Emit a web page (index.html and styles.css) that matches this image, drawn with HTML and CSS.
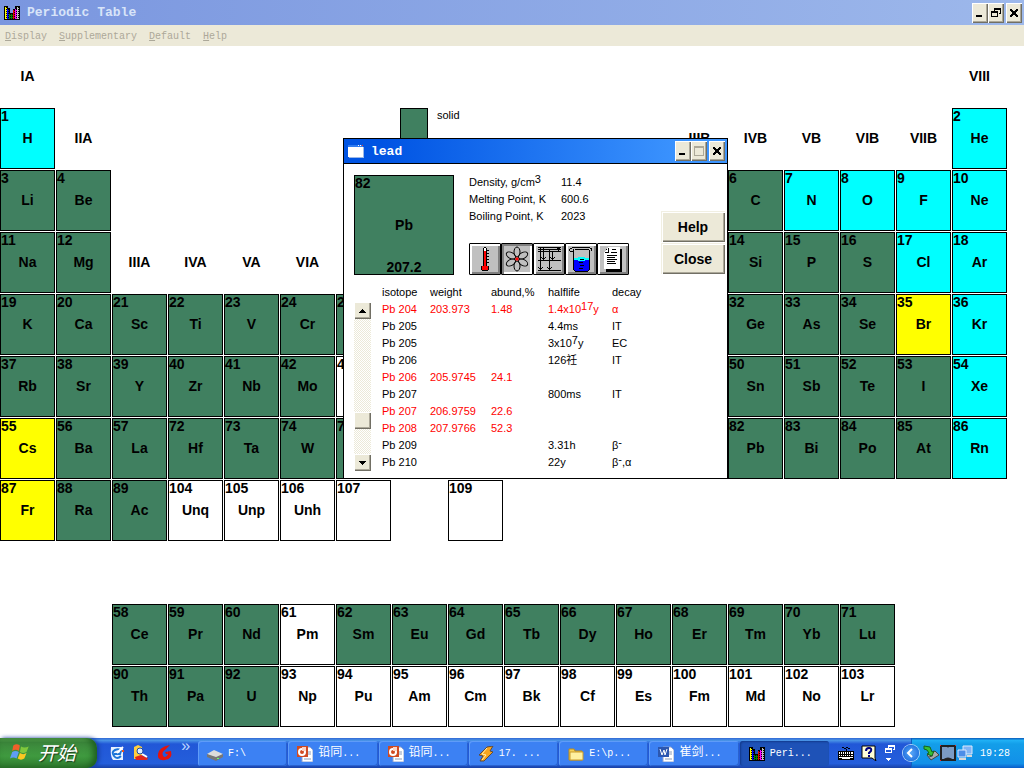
FILE: index.html
```
<!DOCTYPE html>
<html lang="en">
<head>
    <meta charset="UTF-8">
    <meta name="viewport" content="width=device-width, initial-scale=1.0">
    <title>Periodic Table</title>
    <link rel="stylesheet" href="styles.css">
</head>
<body>
    <!-- shared icons -->
    <svg class="defs" width="0" height="0" aria-hidden="true">
        <symbol id="app" viewBox="0 0 16 14" shape-rendering="crispEdges">
            <path d="M0 0h4v2h2v5h3V3h2V0h5v14H0z" fill="#000"/>
            <path d="M1 1h2v12H1z" fill="#ff0"/>
            <path d="M3 3h2v10H3z" fill="#00f"/>
            <path d="M5 8h4v5H5z" fill="#008000"/>
            <path d="M9 4h2v9H9z" fill="#e00000"/>
            <path d="M11 3h2v10h-2z" fill="#f0f"/>
            <path d="M13 1h2v12h-2z" fill="#c0c0c0"/>
            <path d="M2.500 1v12M4.500 3v10M6.500 8v5M8.500 8v5M10.500 4v9M12.500 3v10M14.500 1v12" stroke="#000" stroke-dasharray="1 1" fill="none"/>
        </symbol>
        <symbol id="min" viewBox="0 0 12 12" shape-rendering="crispEdges">
            <path d="M2 8h6v2H2z"/>
        </symbol>
        <symbol id="restore" viewBox="0 0 12 12" shape-rendering="crispEdges">
            <path d="M4 1h7v6H9V6h1V3H5v1H4zM1 4h7v6H1zM2 6v3h5V6z" fill-rule="evenodd"/>
        </symbol>
        <symbol id="max" viewBox="0 0 12 12" shape-rendering="crispEdges">
            <path d="M1 1h10v10H1zM2 3v7h8V3z" fill-rule="evenodd"/>
        </symbol>
        <symbol id="close" viewBox="0 0 12 12" shape-rendering="crispEdges">
            <path d="M2 2h2v1h1v1h2V3h1V2h2v2H9v1H8v2h1v1h1v2H8V9H7V8H5v1H4v1H2V8h1V7h1V5H3V4H2z"/>
        </symbol>
        <symbol id="ppt" viewBox="0 0 16 16">
            <path d="M5 1h8l3 3v12H5z" fill="#fff" stroke="#8ba0cf"/>
            <path d="M11 6h3M11 8h3M7 13h7" stroke="#8a9ab8"/>
            <path d="M0 0h11v11H0z" fill="#d04a22"/>
            <circle cx="5" cy="6" r="3" fill="none" stroke="#fff" stroke-width="2"/>
            <path d="M5 5V1h4v4z" fill="#fbd3c4"/>
        </symbol>
    </svg>

    <header class="titlebar">
        <svg class="app-icon"><use href="#app"/></svg>
        <h1>Periodic Table</h1>
        <button class="win-btn" aria-label="Minimize"><svg><use href="#min"/></svg></button>
        <button class="win-btn" aria-label="Restore"><svg><use href="#restore"/></svg></button>
        <button class="win-btn last" aria-label="Close"><svg><use href="#close"/></svg></button>
    </header>
    <nav class="menubar">
        <a href="#"><u>D</u>isplay</a>
        <a href="#"><u>S</u>upplementary</a>
        <a href="#"><u>D</u>efault</a>
        <a href="#"><u>H</u>elp</a>
    </nav>

    <main class="table">
        <div class="group c1">IA</div>
        <div class="group c18">VIII</div>

        <div class="el gas c1"><i>1</i><b>H</b></div>
        <div class="group">IIA</div>
        <div class="legend"><span class="swatch"></span>solid</div>
        <div class="group c13">IIIB</div>
        <div class="group">IVB</div>
        <div class="group">VB</div>
        <div class="group">VIB</div>
        <div class="group">VIIB</div>
        <div class="el gas"><i>2</i><b>He</b></div>

        <div class="el c1"><i>3</i><b>Li</b></div>
        <div class="el"><i>4</i><b>Be</b></div>
        <div class="el c14"><i>6</i><b>C</b></div>
        <div class="el gas"><i>7</i><b>N</b></div>
        <div class="el gas"><i>8</i><b>O</b></div>
        <div class="el gas"><i>9</i><b>F</b></div>
        <div class="el gas"><i>10</i><b>Ne</b></div>

        <div class="el c1"><i>11</i><b>Na</b></div>
        <div class="el"><i>12</i><b>Mg</b></div>
        <div class="group">IIIA</div>
        <div class="group">IVA</div>
        <div class="group">VA</div>
        <div class="group">VIA</div>
        <div class="el c14"><i>14</i><b>Si</b></div>
        <div class="el"><i>15</i><b>P</b></div>
        <div class="el"><i>16</i><b>S</b></div>
        <div class="el gas"><i>17</i><b>Cl</b></div>
        <div class="el gas"><i>18</i><b>Ar</b></div>

        <div class="el c1"><i>19</i><b>K</b></div>
        <div class="el"><i>20</i><b>Ca</b></div>
        <div class="el"><i>21</i><b>Sc</b></div>
        <div class="el"><i>22</i><b>Ti</b></div>
        <div class="el"><i>23</i><b>V</b></div>
        <div class="el"><i>24</i><b>Cr</b></div>
        <div class="el"><i>25</i></div>
        <div class="el c14"><i>32</i><b>Ge</b></div>
        <div class="el"><i>33</i><b>As</b></div>
        <div class="el"><i>34</i><b>Se</b></div>
        <div class="el liquid"><i>35</i><b>Br</b></div>
        <div class="el gas"><i>36</i><b>Kr</b></div>

        <div class="el c1"><i>37</i><b>Rb</b></div>
        <div class="el"><i>38</i><b>Sr</b></div>
        <div class="el"><i>39</i><b>Y</b></div>
        <div class="el"><i>40</i><b>Zr</b></div>
        <div class="el"><i>41</i><b>Nb</b></div>
        <div class="el"><i>42</i><b>Mo</b></div>
        <div class="el synthetic"><i>43</i></div>
        <div class="el c14"><i>50</i><b>Sn</b></div>
        <div class="el"><i>51</i><b>Sb</b></div>
        <div class="el"><i>52</i><b>Te</b></div>
        <div class="el"><i>53</i><b>I</b></div>
        <div class="el gas"><i>54</i><b>Xe</b></div>

        <div class="el liquid c1"><i>55</i><b>Cs</b></div>
        <div class="el"><i>56</i><b>Ba</b></div>
        <div class="el"><i>57</i><b>La</b></div>
        <div class="el"><i>72</i><b>Hf</b></div>
        <div class="el"><i>73</i><b>Ta</b></div>
        <div class="el"><i>74</i><b>W</b></div>
        <div class="el"><i>75</i></div>
        <div class="el c14"><i>82</i><b>Pb</b></div>
        <div class="el"><i>83</i><b>Bi</b></div>
        <div class="el"><i>84</i><b>Po</b></div>
        <div class="el"><i>85</i><b>At</b></div>
        <div class="el gas"><i>86</i><b>Rn</b></div>

        <div class="el liquid c1"><i>87</i><b>Fr</b></div>
        <div class="el"><i>88</i><b>Ra</b></div>
        <div class="el"><i>89</i><b>Ac</b></div>
        <div class="el synthetic"><i>104</i><b>Unq</b></div>
        <div class="el synthetic"><i>105</i><b>Unp</b></div>
        <div class="el synthetic"><i>106</i><b>Unh</b></div>
        <div class="el synthetic"><i>107</i></div>
        <div class="el synthetic c9"><i>109</i></div>

        <div class="spacer"></div>

        <div class="el c3"><i>58</i><b>Ce</b></div>
        <div class="el"><i>59</i><b>Pr</b></div>
        <div class="el"><i>60</i><b>Nd</b></div>
        <div class="el synthetic"><i>61</i><b>Pm</b></div>
        <div class="el"><i>62</i><b>Sm</b></div>
        <div class="el"><i>63</i><b>Eu</b></div>
        <div class="el"><i>64</i><b>Gd</b></div>
        <div class="el"><i>65</i><b>Tb</b></div>
        <div class="el"><i>66</i><b>Dy</b></div>
        <div class="el"><i>67</i><b>Ho</b></div>
        <div class="el"><i>68</i><b>Er</b></div>
        <div class="el"><i>69</i><b>Tm</b></div>
        <div class="el"><i>70</i><b>Yb</b></div>
        <div class="el"><i>71</i><b>Lu</b></div>

        <div class="el c3"><i>90</i><b>Th</b></div>
        <div class="el"><i>91</i><b>Pa</b></div>
        <div class="el"><i>92</i><b>U</b></div>
        <div class="el synthetic"><i>93</i><b>Np</b></div>
        <div class="el synthetic"><i>94</i><b>Pu</b></div>
        <div class="el synthetic"><i>95</i><b>Am</b></div>
        <div class="el synthetic"><i>96</i><b>Cm</b></div>
        <div class="el synthetic"><i>97</i><b>Bk</b></div>
        <div class="el synthetic"><i>98</i><b>Cf</b></div>
        <div class="el synthetic"><i>99</i><b>Es</b></div>
        <div class="el synthetic"><i>100</i><b>Fm</b></div>
        <div class="el synthetic"><i>101</i><b>Md</b></div>
        <div class="el synthetic"><i>102</i><b>No</b></div>
        <div class="el synthetic"><i>103</i><b>Lr</b></div>
    </main>

    <section class="dialog" role="dialog" aria-labelledby="dialogTitle">
        <div class="titlebar active">
            <svg class="app-icon" viewBox="0 0 16 14" shape-rendering="crispEdges">
                <path d="M0 1h15v12H0z" fill="#fff"/>
                <path d="M0 1h15v2H0z" fill="#2f7bf0"/>
                <path d="M10 1h1v1h-1zM12 1h1v1h-1z" fill="#fff"/>
                <path d="M14 1h1v1h-1z" fill="#f03c1e"/>
                <path d="M15 3v10H1" stroke="#9cb8e8" fill="none"/>
            </svg>
            <h2 id="dialogTitle">lead</h2>
            <button class="win-btn" aria-label="Minimize"><svg><use href="#min"/></svg></button>
            <button class="win-btn off" aria-label="Maximize" disabled><svg><use href="#max"/></svg></button>
            <button class="win-btn last" aria-label="Close"><svg><use href="#close"/></svg></button>
        </div>

        <div class="summary">
            <div class="el big"><i>82</i><b>Pb</b><em>207.2</em></div>
            <div class="facts">
                <dl>
                    <dt>Density, g/cm<sup>3</sup></dt><dd>11.4</dd>
                    <dt>Melting Point, K</dt><dd>600.6</dd>
                    <dt>Boiling Point, K</dt><dd>2023</dd>
                </dl>
                <div class="tools">
                    <button aria-label="Thermal data">
                        <svg viewBox="0 0 28 28" shape-rendering="crispEdges">
                            <path d="M12 3h1V2h2v1h1v19h-4z" fill="#000"/>
                            <path d="M13 3h2v3h-2z" fill="#fff"/>
                            <path d="M13 6h2v16h-2z" fill="red"/>
                            <path d="M10 21h8v4h-1v1h-6v-1h-1z" fill="#000"/>
                            <path d="M11 21h6v4h-6z" fill="red"/>
                            <path d="M16 5.500h2M16 8.500h2M16 11.500h2M16 14.500h2M16 17.500h2" stroke="#000"/>
                        </svg>
                    </button>
                    <button class="pressed" aria-label="Isotopes" aria-pressed="true">
                        <svg viewBox="0 0 28 28">
                            <g fill="none" stroke="#000">
                                <ellipse cx="14" cy="7" rx="3" ry="5"/>
                                <ellipse cx="14" cy="7" rx="3" ry="5" transform="rotate(60 14 14)"/>
                                <ellipse cx="14" cy="7" rx="3" ry="5" transform="rotate(120 14 14)"/>
                                <ellipse cx="14" cy="7" rx="3" ry="5" transform="rotate(180 14 14)"/>
                                <ellipse cx="14" cy="7" rx="3" ry="5" transform="rotate(240 14 14)"/>
                                <ellipse cx="14" cy="7" rx="3" ry="5" transform="rotate(300 14 14)"/>
                            </g>
                            <path d="M12.500 12.500h3v3h-3z" fill="red"/>
                        </svg>
                    </button>
                    <button aria-label="Energy levels">
                        <svg viewBox="0 0 28 28" shape-rendering="crispEdges">
                            <path d="M3 2.500h23M3 4.500h23M3 6.500h23M3 15.500h23M3 25.500h23M5.500 2v23M8.500 2v13M14.500 4v21M17.500 6v9M23.500 3v4" fill="none" stroke="#000"/>
                            <path d="M3 22h1v1h1v1h1v-1h1v-1h1v1H7v1H6v1H5v-1H4v-1H3zM12 22h1v1h1v1h1v-1h1v-1h1v1h-1v1h-1v1h-1v-1h-1v-1h-1zM6 12h1v1h1v1h1v-1h1v-1h1v1h-1v1H9v1H8v-1H7v-1H6zM15 12h1v1h1v1h1v-1h1v-1h1v1h-1v1h-1v1h-1v-1h-1v-1h-1z"/>
                            <path d="M21 5l2-3 3 3z"/>
                        </svg>
                    </button>
                    <button aria-label="Chemical properties">
                        <svg viewBox="0 0 28 28" shape-rendering="crispEdges">
                            <path d="M7 13h15v13H7z" fill="#00f"/>
                            <path d="M7 13h4v-1h7v1h4v2h-4v1h-7v-1H7z" fill="#0ff"/>
                            <path d="M5 2h18v1H5zM3 3h2v1H3zM23 3h2v3h-1V4h-1zM2 4h1v2H2zM3 6h3v1H3zM8 4h14v1H8zM6 4h1v21H6zM22 5h1v20h-1zM7 25h1v1h13v-1h1v1h-1v1H8v-1H7z"/>
                            <path d="M13 14.500h4M12 17.500h4M13 20.500h4M12 23.500h4" stroke="#000"/>
                        </svg>
                    </button>
                    <button aria-label="Notes">
                        <svg viewBox="0 0 28 28" shape-rendering="crispEdges">
                            <path d="M7 4h16v23H7z"/>
                            <path d="M9 2h12v22H5V7h1V6h1V5h1V3h1z" fill="#fff"/>
                            <path d="M9 3h1v5H6V7h3zM13 4h4v1h-4zM12 7h6v1h-6zM8 10h10v1H8zM8 12h8v1H8zM8 14h10v1H8zM8 16h8v1H8zM8 18h9v1H8z"/>
                        </svg>
                    </button>
                </div>
            </div>
            <div class="actions">
                <button>Help</button>
                <button>Close</button>
            </div>
        </div>

        <div class="isotopes">
            <div class="scrollbar">
                <button aria-label="Scroll up"><svg viewBox="0 0 7 4" shape-rendering="crispEdges"><path d="M3 0h1v1h1v1h1v1h1v1H0V3h1V2h1V1h1z"/></svg></button>
                <span class="thumb"></span>
                <button aria-label="Scroll down"><svg viewBox="0 0 7 4" shape-rendering="crispEdges"><path d="M0 0h7v1H6v1H5v1H4v1H3V3H2V2H1V1H0z"/></svg></button>
            </div>
            <table>
                <thead>
                    <tr><th>isotope</th><th>weight</th><th>abund,%</th><th>halflife</th><th>decay</th></tr>
                </thead>
                <tbody>
                    <tr class="natural"><td>Pb 204</td><td>203.973</td><td>1.48</td><td>1.4x10<sup>17</sup>y</td><td>α</td></tr>
                    <tr><td>Pb 205</td><td></td><td></td><td>4.4ms</td><td>IT</td></tr>
                    <tr><td>Pb 205</td><td></td><td></td><td>3x10<sup>7</sup>y</td><td>EC</td></tr>
                    <tr><td>Pb 206</td><td></td><td></td><td>126祍</td><td>IT</td></tr>
                    <tr class="natural"><td>Pb 206</td><td>205.9745</td><td>24.1</td><td></td><td></td></tr>
                    <tr><td>Pb 207</td><td></td><td></td><td>800ms</td><td>IT</td></tr>
                    <tr class="natural"><td>Pb 207</td><td>206.9759</td><td>22.6</td><td></td><td></td></tr>
                    <tr class="natural"><td>Pb 208</td><td>207.9766</td><td>52.3</td><td></td><td></td></tr>
                    <tr><td>Pb 209</td><td></td><td></td><td>3.31h</td><td>β<sup>-</sup></td></tr>
                    <tr><td>Pb 210</td><td></td><td></td><td>22y</td><td>β<sup>-</sup>,α</td></tr>
                </tbody>
            </table>
        </div>
    </section>

    <footer class="taskbar">
        <button class="start">
            <svg viewBox="0 0 20 18">
                <path d="M3 3q3-2 6 0L8 8Q5 6 2 8z" fill="#f0602a"/>
                <path d="M10 4q3 2 7 0l-2 5q-3 2-6 0z" fill="#7fc83c"/>
                <path d="M2 9q3-2 6 0l-2 6Q3 13 0 15z" fill="#5f9df5"/>
                <path d="M9 10q3 2 6 0l-2 5q-3 2-6 0z" fill="#fbc822"/>
            </svg>
            开始
        </button>
        <div class="quick">
            <a href="#" aria-label="Browser">
                <svg viewBox="0 0 16 16">
                    <path d="M2 2h10l2 2v11H4q-3-3-2-13z" fill="#e8f2ff"/>
                    <path d="M12 11q-4 4-7 0t1-6 6 1l-1 3H5" fill="none" stroke="#1c75d8" stroke-width="2"/>
                    <path d="M8 8l6-6" stroke="#fff" stroke-width="2"/>
                    <path d="M13 5h2v2h-2z" fill="#f0531c"/>
                </svg>
            </a>
            <a href="#" aria-label="Search">
                <svg viewBox="0 0 16 16">
                    <path d="M1 2l4-2 4 2v12H1z" fill="#ffcf3e"/>
                    <path d="M2 12l6-2 7 3-1 2H3z" fill="#e0261c"/>
                    <circle cx="7" cy="6" r="3" fill="#dff0ff" stroke="#204aa0"/>
                    <path d="M9 9l5 3" stroke="#fff" stroke-width="2"/>
                </svg>
            </a>
            <a href="#" aria-label="Player">
                <svg viewBox="0 0 16 16">
                    <path d="M13 0Q2 2 1 9t7 6 6-9l-6 1 1 2h2q-1 3-4 3-4-4 2-8z" fill="#e3140c"/>
                </svg>
            </a>
            <span class="more">»</span>
        </div>
        <div class="tasks">
            <button>
                <svg viewBox="0 0 16 16"><path d="M0 8l7-4 9 4-7 5z" fill="#dcdcdc"/><path d="M0 8l9 3 7-3v3l-7 4-9-4z" fill="#777"/><path d="M10 12h2v1h-2z" fill="#6f6"/></svg>
                <span>F:\</span>
            </button>
            <button><svg><use href="#ppt"/></svg><span><b>铅同</b>...</span></button>
            <button><svg><use href="#ppt"/></svg><span><b>铅同</b>...</span></button>
            <button>
                <svg viewBox="0 0 16 16"><path d="M9 1l6-1-3 5 3 1-9 9H2l3-5-4-1z" fill="#f7a51e" stroke="#5d4a3c"/><path d="M9 2L4 8l4 1-4 5" fill="none" stroke="#fff0b0"/></svg>
                <span>17. ...</span>
            </button>
            <button>
                <svg viewBox="0 0 16 16"><path d="M1 3h5l1 2h7v9H1z" fill="#f4cf56" stroke="#b98a1c"/><path d="M2 6h13v8H2z" fill="#fff0a0" stroke="#c99a2c"/></svg>
                <span>E:\p...</span>
            </button>
            <button>
                <svg viewBox="0 0 16 16"><path d="M5 1h8l3 3v12H5z" fill="#fff" stroke="#8ba0cf"/><path d="M11 6h3M11 8h3M7 13h7" stroke="#8a9ab8"/><path d="M0 1h11v10H0z" fill="#2c57b0"/><path d="M2 3l2 6 2-5 1 5 2-6" fill="none" stroke="#fff"/></svg>
                <span><b>崔剑</b>...</span>
            </button>
            <button class="current"><svg><use href="#app"/></svg><span>Peri...</span></button>
        </div>
        <div class="lang">
            <svg viewBox="0 0 16 16" shape-rendering="crispEdges">
                <path d="M4 2h2v1h2V2h2v1h2v1h-2V3H8v1H6V3H4zM8 4h1v2H8z" fill="#000"/>
                <path d="M0 6h16v9H0z" fill="#000"/>
                <path d="M1 7h14v7H1z" fill="#fff"/>
                <path d="M1 9h14M1 11h14M1 13h3M12 13h3M2.500 7v4M4.500 7v4M6.500 7v4M8.500 7v4M10.500 7v4M12.500 7v4" stroke="#000" fill="none"/>
            </svg>
            <svg viewBox="0 0 16 16">
                <path d="M1 1h13v12l1 3-4-3H1z" fill="#ffffd8" stroke="#000"/>
                <path d="M5 6q0-3 3-3t2 3l-2 2v1M8 10v2" fill="none" stroke="#000080" stroke-width="2"/>
            </svg>
            <svg viewBox="0 0 16 16" shape-rendering="crispEdges">
                <path d="M4 0h7v5H9V4h1V2H5v1H4zM1 3h7v5H1zM2 5v2h5V5z" fill="#fff" fill-rule="evenodd"/>
                <path d="M2 13h5v1H6v1H5v1H4v-1H3v-1H2z" fill="#fff"/>
            </svg>
        </div>
        <div class="tray">
            <button class="expand" aria-label="Show hidden icons"><svg viewBox="0 0 16 16"><path d="M9 4L5 8l4 4" fill="none" stroke="#fff" stroke-width="2"/></svg></button>
            <svg viewBox="0 0 16 16"><path d="M4 10l8-4 4 4-8 5z" fill="#aaa" stroke="#444"/><path d="M6 11l3-1 1 1-3 1z" fill="#333"/><path d="M1 1l6 1 2 5 2-1-2 5-5-2 2-1-2-3-3-1z" fill="#35c135" stroke="#15631a"/></svg>
            <svg viewBox="0 0 16 16"><path d="M1 1h14v14H1z" fill="#7c9cc4" stroke="#222" stroke-width="2"/><path d="M5 1q3 2 6 0M3 15q5-4 10 0" fill="#222" stroke="#222"/><path d="M0 0h1v1H0zM15 0h1v1h-1zM0 15h1v1H0z" fill="#e22"/></svg>
            <svg viewBox="0 0 16 16"><path d="M6 1h9v8H6z" fill="#7fb4f6" stroke="#dbe8fb"/><path d="M1 5h8v7H1z" fill="#4c8de8" stroke="#dbe8fb"/><path d="M2 14h7M10 11h5" stroke="#d8d8d8" stroke-width="2"/></svg>
            <time>19:28</time>
        </div>
    </footer>
</body>
</html>
```
FILE: styles.css
```
* {
    box-sizing: border-box;
}

body {
    margin: 0;
    min-height: 100vh;
    display: flex;
    flex-direction: column;
    position: relative;
    background: #fff;
    color: #000;
    font-family: "Liberation Sans", "Noto Sans CJK SC", sans-serif;
    font-size: 11px;
}

button {
    margin: 0;
    padding: 0;
    border: none;
    font: inherit;
    color: inherit;
}

svg {
    display: block;
    flex: none;
}

.defs {
    position: absolute;
}

/* title bars */
.titlebar {
    display: flex;
    align-items: center;
    height: 25px;
    padding: 0 2px 0 4px;
    background: linear-gradient(to right, #7a96df, #9db8eb);
    color: #d8e4f8;
}

.titlebar.active {
    background: linear-gradient(to right, #0054e3 10%, #3d95ff 90%);
    border-bottom: 1px solid #000;
    color: #fff;
}

.titlebar h1,
.titlebar h2 {
    flex: 1;
    margin: 0 0 0 7px;
    font: bold 13px "Liberation Mono", monospace;
}

.app-icon {
    width: 16px;
    height: 14px;
}

.win-btn {
    display: flex;
    align-items: center;
    justify-content: center;
    width: 16px;
    height: 20px;
    background: #ece9d8;
    box-shadow: inset 1px 1px #fff, inset -1px -1px #716f64, inset -2px -2px #aca899;
}

.win-btn svg {
    width: 12px;
    height: 12px;
}

.win-btn.last {
    margin-left: 2px;
}

.win-btn.off {
    fill: #aca899;
}

.menubar {
    display: flex;
    align-items: center;
    gap: 12px;
    height: 21px;
    padding: 2px 5px 0;
    background: #ece9d8;
    font: 10px "Liberation Mono", monospace;
}

.menubar a {
    color: #aca899;
    text-decoration: none;
}

/* periodic table */
.table {
    flex: 1;
    display: grid;
    grid-template-columns: repeat(18, 1fr);
    grid-auto-rows: 61px;
    gap: 1px;
    margin-right: 17px;
    font-size: 14px;
    font-weight: bold;
}

.group {
    display: flex;
    align-items: center;
    justify-content: center;
    padding-bottom: 2px;
}

.el {
    display: grid;
    padding-bottom: 2px;
    border: 1px solid #000;
    background: #408060;
}

.el i,
.el b,
.el em {
    grid-area: 1 / 1;
    font-style: normal;
    line-height: 14px;
}

.el b {
    place-self: center;
}

.el em {
    place-self: end center;
}

.gas { background: #0ff; }
.liquid { background: #ff0; }
.synthetic { background: #fff; }

.c1 { grid-column: 1; }
.c3 { grid-column: 3; }
.c9 { grid-column: 9; }
.c13 { grid-column: 13; }
.c14 { grid-column: 14; }
.c18 { grid-column: 18; }

.spacer {
    grid-column: 1 / -1;
}

.legend {
    grid-column: 8 / span 3;
    display: flex;
    gap: 9px;
    padding-left: 8px;
    font-size: 11px;
    font-weight: normal;
    line-height: 14px;
}

.swatch {
    width: 28px;
    border: 1px solid #000;
    background: #408060;
}

/* element window */
.dialog {
    position: absolute;
    left: 343px;
    top: 138px;
    width: 385px;
    border: 1px solid #000;
    background: #fff;
}

.summary {
    display: flex;
    padding: 11px 2px 0 10px;
}

.big {
    width: 100px;
    height: 100px;
    padding-bottom: 0;
    font-size: 14px;
    font-weight: bold;
}

.facts {
    flex: 1;
    margin-left: 15px;
}

dl {
    display: grid;
    grid-template-columns: 92px 1fr;
    grid-auto-rows: 17px;
    margin: 0 0 17px;
    line-height: 14px;
}

dt,
dd {
    margin: 0;
    white-space: nowrap;
}

sup {
    font-size: 11px;
    line-height: 0;
    vertical-align: 3px;
}

.tools {
    display: flex;
}

.tools button {
    width: 32px;
    height: 32px;
    padding: 1px;
    border: 1px solid #000;
    border-radius: 1px;
    background: #c0c0c0;
    box-shadow: inset 2px 2px #fff, inset -2px -2px #808080;
}

.tools button.pressed {
    box-shadow: inset 2px 2px #808080, inset -2px -2px #fff;
}

.actions {
    display: flex;
    flex-direction: column;
    gap: 1px;
    width: 64px;
    padding-top: 36px;
}

.actions button {
    height: 31px;
    background: #ece9d8;
    box-shadow: inset 1px 1px #f1efe2, inset 2px 2px #fff, inset -1px -1px #716f64, inset -2px -2px #aca899;
    font-size: 14px;
    font-weight: bold;
}

.isotopes {
    display: flex;
    gap: 11px;
    padding: 9px 10px 7px;
}

.scrollbar {
    display: flex;
    flex-direction: column;
    width: 17px;
    margin-top: 18px;
    background: repeating-conic-gradient(#fff 0 25%, #ece9d8 0 50%) 0 0 / 2px 2px;
}

.scrollbar button,
.thumb {
    display: flex;
    align-items: center;
    justify-content: center;
    width: 17px;
    height: 17px;
    background: #ece9d8;
    box-shadow: inset 1px 1px #fff, inset -1px -1px #716f64, inset -2px -2px #aca899;
}

.scrollbar button svg {
    width: 7px;
    height: 4px;
}

.thumb {
    margin: auto 0 25px;
}

.isotopes table {
    border-collapse: collapse;
    table-layout: fixed;
    width: 290px;
}

th,
td {
    height: 17px;
    padding: 0;
    font-weight: normal;
    line-height: 17px;
    text-align: left;
    white-space: nowrap;
}

th:nth-child(1) { width: 48px; }
th:nth-child(2) { width: 61px; }
th:nth-child(3) { width: 57px; }
th:nth-child(4) { width: 64px; }

.natural {
    color: red;
}

/* taskbar */
.taskbar {
    display: flex;
    align-items: stretch;
    height: 30px;
    background: linear-gradient(#3168d5, #4993e6 8%, #2157d7 20%, #245edb 85%, #1941a5);
    color: #fff;
    font: 10px "Liberation Mono", "Noto Sans CJK SC", monospace;
}

.start {
    display: flex;
    align-items: center;
    gap: 6px;
    width: 97px;
    padding: 0 0 3px 10px;
    border-radius: 0 10px 10px 0;
    background: linear-gradient(#5eac56, #3c873c 15%, #3f9a3f 60%, #2f7a2f);
    box-shadow: inset -4px 0 6px #1e5f1e, 2px 0 4px #173c9c;
    font: italic 19px "Noto Sans CJK SC", sans-serif;
    text-shadow: 1px 1px 1px #1a3c1a;
}

.start svg {
    width: 22px;
    height: 20px;
}

.quick {
    display: flex;
    align-items: center;
    gap: 8px;
    width: 101px;
    padding-left: 12px;
}

.quick svg,
.tasks svg,
.lang svg,
.tray svg {
    width: 16px;
    height: 16px;
}

.more {
    align-self: flex-start;
    color: #b8d4ff;
    font-size: 16px;
}

.tasks {
    flex: 1;
    display: grid;
    grid-template-columns: repeat(7, 1fr);
    gap: 1px;
    padding: 3px 0 2px;
}

.tasks button {
    display: flex;
    align-items: center;
    gap: 5px;
    min-width: 0;
    padding-left: 9px;
    border-radius: 3px;
    background: #3c81f3;
    box-shadow: inset 1px 1px #5f9cf8, inset -1px -1px #2a62cf;
    white-space: nowrap;
}

.tasks span {
    line-height: 18px;
}

.tasks b {
    font-size: 12px;
    font-weight: normal;
}

.tasks button.current {
    background: #1e52b7;
    box-shadow: inset 1px 1px 2px #123a8c;
}

.lang {
    display: flex;
    align-items: center;
    gap: 7px;
    width: 82px;
    padding-left: 9px;
}

.tray {
    display: flex;
    align-items: center;
    gap: 1px;
    width: 113px;
    border-left: 1px solid #0e5fc0;
    background: linear-gradient(#0c59b9, #1fb0f5 8%, #139ee9 20%, #1290e8 85%, #095bc9);
}

.expand {
    margin: 0 3px 0 -9px;
    border-radius: 50%;
    background: radial-gradient(#58a8f8, #1160d8);
    box-shadow: 0 0 0 1px #b0d4f8;
}

.tray time {
    margin-left: 6px;
}
```
